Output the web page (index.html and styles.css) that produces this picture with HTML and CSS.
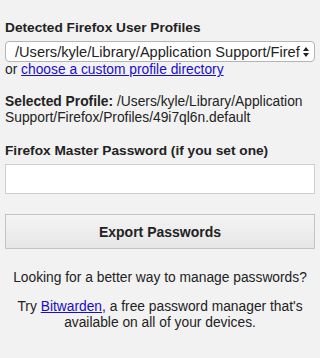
FILE: index.html
```html
<!DOCTYPE html>
<html lang="en">
<head>
    <meta charset="UTF-8">
    <title>Firefox Password Exporter</title>
    <link rel="stylesheet" href="styles.css">
</head>
<body>
    <div class="container">
        <section class="profiles">
            <h3>Detected Firefox User Profiles</h3>
            <div class="select-box">
                <span class="select-text">/Users/kyle/Library/Application Support/Firefox/Profiles/49i7ql6n.default</span>
                <svg class="arrows" width="8" height="12" viewBox="0 0 8 12">
                    <path d="M1 5 L4 1 L7 5 Z" fill="#222"/>
                    <path d="M1 7 L4 11 L7 7 Z" fill="#222"/>
                </svg>
            </div>
            <div class="custom">or <a href="#">choose a custom profile directory</a></div>
        </section>

        <p class="selected"><strong>Selected Profile:</strong> /Users/kyle/Library/Application Support/Firefox/Profiles/49i7ql6n.default</p>

        <section class="password">
            <h3>Firefox Master Password (if you set one)</h3>
            <input type="password" class="text-input">
        </section>

        <button class="export">Export Passwords</button>

        <p class="note">Looking for a better way to manage passwords?</p>
        <p class="note">Try <a href="#">Bitwarden</a>, a free password manager that's available on all of your devices.</p>
    </div>
</body>
</html>
```

FILE: styles.css
```css
body {
    font-family: 'Liberation Sans', Arial, sans-serif;
    font-size: 13.8px;
    line-height: 16px;
    color: #222;
    margin: 0;
    padding: 0 5px;
    background-color: #f2f2f2;
}

.container {
    padding-top: 20px;
}

h3 {
    font-size: 13.7px;
    font-weight: bold;
    margin: 0 0 5px;
}

a {
    color: #1a0dcc;
}

.select-box {
    display: flex;
    align-items: center;
    height: 19px;
    background: white;
    border: 1px solid #b4b4b4;
    border-radius: 4px;
    padding: 0 4px 0 9px;
    font-size: 14.6px;
}

.select-text {
    flex: 1;
    white-space: nowrap;
    overflow: hidden;
}

.arrows {
    margin-left: 2px;
}

.custom {
    margin-top: 0;
}

.selected {
    margin: 16px 0 0;
}

.password {
    margin-top: 17px;
}

.text-input {
    display: block;
    box-sizing: border-box;
    width: 100%;
    height: 30px;
    margin: 0;
    border: 1px solid #cfcfcf;
    background: white;
}

.export {
    display: block;
    width: 100%;
    height: 35px;
    margin-top: 20px;
    font-family: inherit;
    font-size: 14px;
    font-weight: bold;
    color: #222;
    border: 1px solid #c4c4c4;
    background: linear-gradient(#f4f4f4, #e6e6e6);
}

.note {
    text-align: center;
    margin: 21px 0 0;
}

.note + .note {
    margin-top: 13px;
}
```
